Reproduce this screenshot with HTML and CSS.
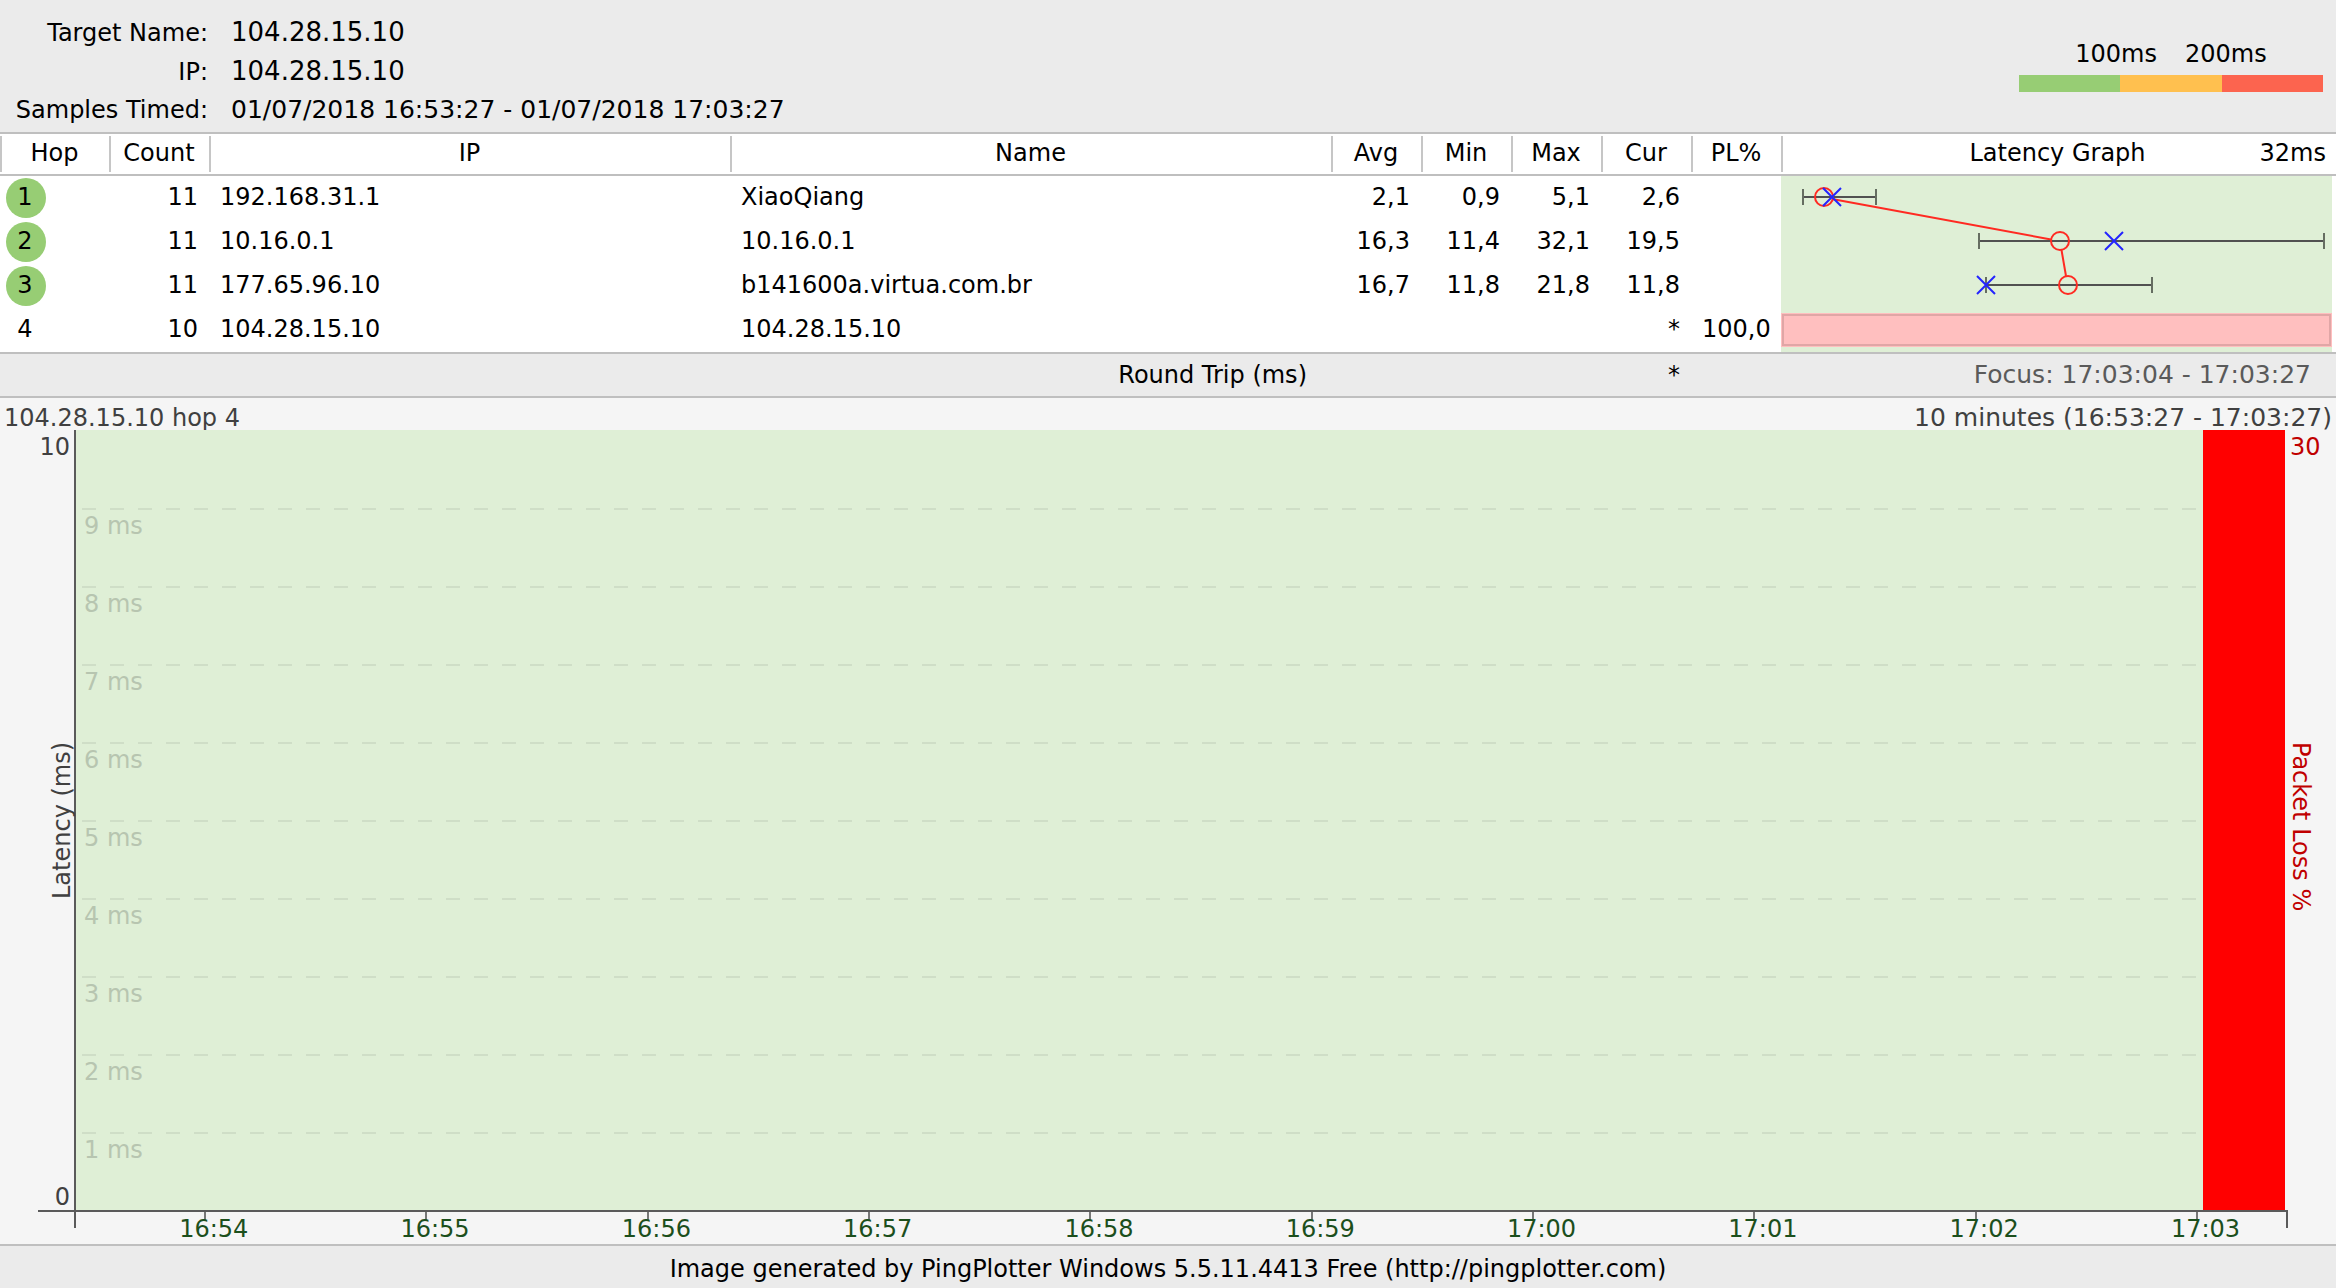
FILE: index.html
```html
<!DOCTYPE html>
<html lang="en">
<head>
<meta charset="utf-8">
<title>PingPlotter - 104.28.15.10</title>
<link rel="stylesheet" href="styles.css">
</head>
<body>
<header class="summary">
  <dl class="target">
    <dt>Target Name:</dt><dd class="host">104.28.15.10</dd>
    <dt>IP:</dt><dd class="host">104.28.15.10</dd>
    <dt>Samples Timed:</dt><dd class="period">01/07/2018 16:53:27 - 01/07/2018 17:03:27</dd>
  </dl>
  <div class="legend">
    <div class="legend-labels"><span>100ms</span><span>200ms</span></div>
    <div class="legend-bar"><i class="good"></i><i class="warn"></i><i class="bad"></i></div>
  </div>
</header>

<main>
<table class="hops">
  <colgroup>
    <col class="c-hop"><col class="c-count"><col class="c-ip"><col class="c-name">
    <col class="c-num"><col class="c-num"><col class="c-num"><col class="c-num"><col class="c-num"><col class="c-graph">
  </colgroup>
  <thead>
    <tr>
      <th>Hop</th><th>Count</th><th>IP</th><th>Name</th><th>Avg</th><th>Min</th><th>Max</th><th>Cur</th><th>PL%</th>
      <th><div class="graph-head"><span>Latency Graph</span><span class="scale">32ms</span></div></th>
    </tr>
  </thead>
  <tbody>
    <tr>
      <td class="hop"><span class="badge ok">1</span></td><td class="num">11</td><td>192.168.31.1</td><td>XiaoQiang</td>
      <td class="num">2,1</td><td class="num">0,9</td><td class="num">5,1</td><td class="num">2,6</td><td></td>
      <td class="graph" rowspan="4">
        <svg viewBox="0 0 551 176" preserveAspectRatio="none" role="img" aria-label="Latency by hop">
          <rect class="lost" x="0" y="137" width="551" height="34"/>
          <rect class="lost-edge" x="2" y="139" width="547" height="30"/>
          <path class="trace" d="M51 23L270 63.500M280.500 74L285 100"/>
          <path class="range" d="M22 21H95M198 65H543M205 109H371"/>
          <path class="caps" d="M22 13v16M95 13v16M198 57v16M543 57v16M205 101v16M371 101v16"/>
          <g class="avg"><circle cx="43" cy="21" r="9"/><circle cx="279" cy="65" r="9"/><circle cx="287" cy="109" r="9"/></g>
          <path class="cur" d="M42 12l18 18M60 12l-18 18M324 56l18 18M342 56l-18 18M196 100l18 18M214 100l-18 18"/>
        </svg>
      </td>
    </tr>
    <tr>
      <td class="hop"><span class="badge ok">2</span></td><td class="num">11</td><td>10.16.0.1</td><td>10.16.0.1</td>
      <td class="num">16,3</td><td class="num">11,4</td><td class="num">32,1</td><td class="num">19,5</td><td></td>
    </tr>
    <tr>
      <td class="hop"><span class="badge ok">3</span></td><td class="num">11</td><td>177.65.96.10</td><td>b141600a.virtua.com.br</td>
      <td class="num">16,7</td><td class="num">11,8</td><td class="num">21,8</td><td class="num">11,8</td><td></td>
    </tr>
    <tr>
      <td class="hop"><span class="badge">4</span></td><td class="num">10</td><td>104.28.15.10</td><td>104.28.15.10</td>
      <td></td><td></td><td></td><td class="num">*</td><td class="num">100,0</td>
    </tr>
  </tbody>
  <tfoot>
    <tr>
      <td></td><td></td><td></td><td class="round-trip">Round Trip (ms)</td>
      <td></td><td></td><td></td><td class="num">*</td><td></td><td class="focus">Focus: 17:03:04 - 17:03:27</td>
    </tr>
  </tfoot>
</table>

<section class="timeline">
  <div class="timeline-title"><span>104.28.15.10 hop 4</span><span class="period">10 minutes (16:53:27 - 17:03:27)</span></div>
  <div class="chart">
    <div class="axis-left">
      <div class="limits"><span>10</span><span>0</span></div>
      <div class="axis-name">Latency (ms)</div>
    </div>
    <div class="plot">
      <ol class="levels">
        <li></li><li>9 ms</li><li>8 ms</li><li>7 ms</li><li>6 ms</li><li>5 ms</li><li>4 ms</li><li>3 ms</li><li>2 ms</li><li>1 ms</li>
      </ol>
      <div class="loss" style="width: 3.71%"></div>
    </div>
    <div class="axis-right">
      <span class="loss-max">30</span>
      <div class="axis-name">Packet Loss %</div>
    </div>
  </div>
  <div class="time-axis">
    <i class="stub"></i><i></i>
    <span class="tick">16:54</span><span class="tick">16:55</span><span class="tick">16:56</span><span class="tick">16:57</span><span class="tick">16:58</span><span class="tick">16:59</span><span class="tick">17:00</span><span class="tick">17:01</span><span class="tick">17:02</span><span class="tick">17:03</span>
    <i class="stub"></i>
  </div>
</section>
</main>

<footer class="credit">Image generated by PingPlotter Windows 5.5.11.4413 Free (http://pingplotter.com)</footer>
</body>
</html>
```
FILE: styles.css
```css
* { box-sizing: border-box; }

body {
  margin: 0;
  min-height: 100vh;
  display: flex;
  flex-direction: column;
  background: #f5f5f5;
  color: #000;
  font: 24px/32px "DejaVu Sans", Verdana, sans-serif;
}

main {
  flex: 1;
  display: flex;
  flex-direction: column;
}

.period { font-size: 25px; }

/* Target summary */
.summary {
  display: flex;
  justify-content: space-between;
  height: 134px;
  padding: 12px 13px 0 12px;
  background: #ebebeb;
  border-bottom: 2px solid #bfbfbf;
}
.target {
  display: grid;
  grid-template-columns: 196px auto;
  grid-auto-rows: 39px;
  column-gap: 23px;
  align-items: baseline;
  margin: 0;
  line-height: 40px;
  white-space: nowrap;
}
.target dt { justify-self: end; }
.target dd { margin: 0; }
.target .host { font-size: 26px; }

.legend {
  width: 304px;
  padding-top: 26px;
}
.legend-labels {
  display: flex;
  justify-content: center;
  gap: 28px;
}
.legend-bar {
  display: flex;
  height: 17px;
  margin-top: 5px;
}
.legend-bar i { flex: 1; }
.good { background: #97cd74; }
.warn { background: #ffc04f; }
.bad { background: #fc644f; }

/* Hop table */
.hops {
  width: 100%;
  table-layout: fixed;
  border-collapse: separate;
  border-spacing: 0;
  background: #fff;
  white-space: nowrap;
}
.c-hop { width: 109px; }
.c-count { width: 100px; }
.c-ip { width: 521px; }
.c-num { width: 90px; }
.c-graph { width: 555px; }

.hops th {
  height: 42px;
  padding: 0 0 2px;
  font-weight: 400;
  border-bottom: 2px solid #bfbfbf;
  background: linear-gradient(#c6c6c6, #c6c6c6) 0 2px / 2px 36px no-repeat;
}
.hops td {
  height: 44px;
  padding: 0 11px 2px;
}
.hops .num { text-align: right; }
.hops .hop { padding: 0 6px; }
.badge {
  display: block;
  width: 40px;
  height: 40px;
  padding-right: 2px;
  border-radius: 50%;
  line-height: 38px;
  text-align: center;
}
.ok { background: #97cd74; }

.graph-head {
  display: grid;
  grid-template-columns: 1fr auto 1fr;
  padding: 0 10px 0 8px;
}
.graph-head span:first-child { grid-column: 2; }
.graph-head .scale { justify-self: end; }

.hops .graph { padding: 0 4px 0 0; }
.graph svg {
  display: block;
  width: 100%;
  height: 176px;
  background: #dfefd6;
  fill: none;
  stroke-width: 2;
}
.graph .lost { fill: #ffbfbf; }
.lost-edge { stroke: #e0a6a6; }
.trace, .avg { stroke: #ff2a22; }
.range { stroke: #515151; }
.caps { stroke: #656d61; }
.cur { stroke: #2424ff; }

.hops tfoot td {
  height: 46px;
  padding-bottom: 0;
  background: #ebebeb;
  border-top: 2px solid #bfbfbf;
  border-bottom: 2px solid #bfbfbf;
}
.hops .round-trip {
  padding-right: 24px;
  text-align: right;
}
.hops .focus {
  padding-right: 25px;
  text-align: right;
  font-size: 25px;
  color: #5a5a5a;
}

/* Timeline */
.timeline {
  flex: 1;
  display: flex;
  flex-direction: column;
  color: #404040;
}
.timeline-title {
  display: flex;
  justify-content: space-between;
  align-items: baseline;
  height: 32px;
  padding: 7px 4px 0;
  line-height: 26px;
}
.chart {
  flex: 1;
  display: flex;
}
.axis-left {
  width: 76px;
  display: flex;
  flex-direction: row-reverse;
  border-right: 2px solid #5a5a5a;
}
.limits {
  width: 34px;
  display: flex;
  flex-direction: column;
  justify-content: space-between;
  align-items: flex-end;
  padding: 4px 4px 0 0;
  line-height: 26px;
}
.axis-name {
  writing-mode: vertical-rl;
  text-align: center;
  line-height: 28px;
}
.axis-left .axis-name {
  margin-right: -36px;
  transform: rotate(180deg);
}
.plot {
  flex: 1;
  display: flex;
  background: #dfefd6;
}
.levels {
  flex: 1;
  display: grid;
  grid-template-rows: repeat(10, 1fr);
  margin: 0;
  padding: 0 6px;
  list-style: none;
  color: #b7c5b0;
}
.levels li { padding: 2px 0 0 2px; }
.levels li + li {
  background: repeating-linear-gradient(90deg, #cfdec7 0 14px, transparent 14px 28px) 0 0 / 100% 2px no-repeat;
}
.loss { background: #f00; }
.axis-right {
  width: 51px;
  display: grid;
  justify-items: start;
  padding-left: 2px;
  color: #c00000;
}
.axis-right > * { grid-area: 1 / 1; }
.loss-max {
  padding: 4px 0 0 3px;
  line-height: 26px;
}
.axis-right .axis-name { padding-top: 14px; }

.time-axis {
  display: grid;
  grid-template-columns: 38px 128fr repeat(9, minmax(0, 221fr)) minmax(0, 90fr) 2px;
  height: 34px;
  margin: 0 48px 0 38px;
  border-top: 2px solid #5a5a5a;
  color: #1c4f1c;
}
.stub {
  height: 16px;
  border-right: 2px solid #5a5a5a;
}
.tick {
  padding-top: 2px;
  text-indent: -25px;
  line-height: 30px;
  background: linear-gradient(#777, #777) 0 0 / 2px 8px no-repeat;
}

.credit {
  height: 44px;
  padding-top: 7px;
  text-align: center;
  background: #ebebeb;
  border-top: 2px solid #bfbfbf;
}
```
